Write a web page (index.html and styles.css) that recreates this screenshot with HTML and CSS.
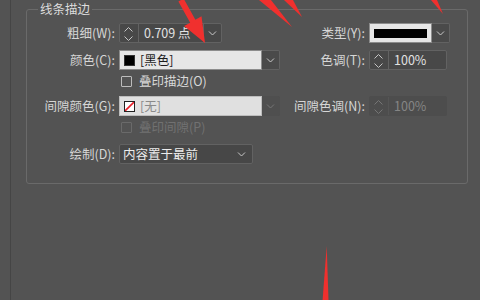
FILE: index.html
```html
<!DOCTYPE html>
<html lang="zh-CN">
<head>
<meta charset="utf-8">
<link rel="stylesheet" href="styles.css">
</head>
<body>
<div class="page">
  <div class="rail"></div>
  <main class="main">
    <fieldset class="group">
      <legend class="legend">线条描边</legend>
      <div class="rows">
        <div class="row">
          <span class="lbl">粗细(W):</span>
          <div class="spin spin-weight">
            <span class="arrows"><svg width="18" height="18" viewBox="0 0 18 18"><path d="M4.5 7.5L8.5 3.5L12.5 7.5M4.5 12.5L8.5 16.5L12.5 12.5" fill="none" stroke="#c4c4c4" stroke-width="1"/></svg></span>
            <span class="val">0.709 点</span>
            <span class="drop"><svg width="9" height="5" viewBox="0 0 9 5"><path d="M1 0.5L4.5 4L8 0.5" fill="none" stroke="#c8c8c8" stroke-width="1"/></svg></span>
          </div>
          <span class="lbl">类型(Y):</span>
          <div class="combo combo-type">
            <span class="field field-type"><span class="stroke-line"></span></span>
            <span class="btn"><svg width="9" height="5" viewBox="0 0 9 5"><path d="M1 0.5L4.5 4L8 0.5" fill="none" stroke="#c8c8c8" stroke-width="1"/></svg></span>
          </div>
        </div>

        <div class="row row-color">
          <span class="lbl">颜色(C):</span>
          <div class="combo combo-color">
            <span class="field"><span class="swatch swatch-black"></span><span class="ftext">[黑色]</span></span>
            <span class="btn"><svg width="9" height="5" viewBox="0 0 9 5"><path d="M1 0.5L4.5 4L8 0.5" fill="none" stroke="#c8c8c8" stroke-width="1"/></svg></span>
          </div>
          <span class="lbl">色调(T):</span>
          <div class="spin spin-tint">
            <span class="arrows"><svg width="18" height="18" viewBox="0 0 18 18"><path d="M4.5 7.5L8.5 3.5L12.5 7.5M4.5 12.5L8.5 16.5L12.5 12.5" fill="none" stroke="#c4c4c4" stroke-width="1"/></svg></span>
            <span class="val">100%</span>
          </div>
        </div>

        <div class="row row-check">
          <span></span>
          <div class="check"><span class="box"></span><span class="ctext">叠印描边(O)</span></div>
        </div>

        <div class="row row-gap">
          <span class="lbl">间隙颜色(G):</span>
          <div class="combo combo-color is-disabled">
            <span class="field"><span class="swatch swatch-none"><svg width="9" height="9" viewBox="0 0 9 9"><path d="M0 9L9 0" stroke="#e8202a" stroke-width="1.6"/></svg></span><span class="ftext">[无]</span></span>
            <span class="btn"><svg width="9" height="5" viewBox="0 0 9 5"><path d="M1 0.5L4.5 4L8 0.5" fill="none" stroke="#767676" stroke-width="1"/></svg></span>
          </div>
          <span class="lbl">间隙色调(N):</span>
          <div class="spin spin-tint is-disabled">
            <span class="arrows"><svg width="18" height="18" viewBox="0 0 18 18"><path d="M4.5 7.5L8.5 3.5L12.5 7.5M4.5 12.5L8.5 16.5L12.5 12.5" fill="none" stroke="#757575" stroke-width="1"/></svg></span>
            <span class="val">100%</span>
          </div>
        </div>

        <div class="row row-check">
          <span></span>
          <div class="check is-disabled"><span class="box"></span><span class="ctext">叠印间隙(P)</span></div>
        </div>

        <div class="row row-draw">
          <span class="lbl">绘制(D):</span>
          <div class="select">
            <span class="stext">内容置于最前</span>
            <svg width="9" height="5" viewBox="0 0 9 5"><path d="M1 0.5L4.5 4L8 0.5" fill="none" stroke="#c8c8c8" stroke-width="1"/></svg>
          </div>
        </div>
      </div>
    </fieldset>
  </main>
</div>
<svg class="marks" width="480" height="300" viewBox="0 0 480 300">
  <polygon points="178.4,1.5 183.6,-1.5 195.4,19.7 201.5,16.3 205,43 184.1,26.1 190.2,22.7" fill="#f0302e"/>
  <polygon points="259,0 271,0 292,27" fill="#f0302e"/>
  <polygon points="284,0 293,0 302,17" fill="#f0302e"/>
  <polygon points="431,0 437,0 443,14" fill="#f0302e"/>
  <polygon points="326.7,246 328.5,300 322.6,300" fill="#f0302e"/>
</svg>
</body>
</html>
```

FILE: styles.css
```css
html, body {
  margin: 0;
  padding: 0;
}
body {
  width: 480px;
  height: 300px;
  overflow: hidden;
  background: #535353;
  font-family: "Noto Sans CJK SC", "Noto Sans", sans-serif;
  font-size: 12.5px;
  color: #d8d8d8;
  position: relative;
}
.page {
  display: flex;
  height: 300px;
}
.rail {
  width: 10px;
  border-right: 1px solid #454545;
  flex: none;
}
.main {
  padding: 1px 0 0 15px;
}
.group {
  box-sizing: border-box;
  width: 442px;
  margin: 0;
  padding: 0 0 19px 0;
  border: 1px solid #6a6a6a;
  border-radius: 3px;
  min-inline-size: 0;
}
.legend {
  margin-left: 11px;
  padding: 0 2px;
  line-height: 16px;
  color: #dcdcdc;
}
.rows {
  display: flex;
  flex-direction: column;
  padding-top: 6px;
}
.row {
  display: grid;
  grid-template-columns: 88px 161px 81px 80px;
  column-gap: 4px;
  align-items: center;
  height: 20px;
}
.row-color { margin-top: 7px; }
.row-check { margin-top: 4px; height: 14px; }
.row-gap { margin-top: 8px; }
.row-draw { margin-top: 10px; }

.lbl {
  text-align: right;
  white-space: nowrap;
  line-height: 20px;
  color: #d6d6d6;
}

/* spinner */
.spin {
  box-sizing: border-box;
  height: 20px;
  display: flex;
  align-items: stretch;
  background: #484848;
  border: 1px solid #626262;
  border-radius: 2px;
}
.spin .arrows {
  width: 18px;
  flex: none;
  border-right: 1px solid #626262;
  display: flex;
  align-items: center;
  justify-content: center;
}
.spin .val {
  flex: 1;
  padding-left: 5px;
  line-height: 18px;
  color: #e2e2e2;
  white-space: nowrap;
}
.spin .drop {
  width: 17px;
  flex: none;
  border-left: 1px solid #626262;
  display: flex;
  align-items: center;
  justify-content: center;
}
.spin-weight { width: 103px; }
.spin-tint { width: 78px; }
.spin.is-disabled {
  background: #4d4d4d;
  border-color: #4d4d4d;
}
.spin.is-disabled .arrows { border-right-color: #555; }
.spin.is-disabled .val { color: #858585; }

/* combo */
.combo {
  height: 20px;
  display: flex;
  align-items: stretch;
}
.combo .field {
  box-sizing: border-box;
  flex: 1;
  display: flex;
  align-items: center;
  background: #e6e6e6;
  border: 1px solid #8c8c8c;
  padding-left: 4px;
}
.combo .btn {
  box-sizing: border-box;
  width: 18px;
  flex: none;
  display: flex;
  align-items: center;
  justify-content: center;
  background: #4a4a4a;
  border: 1px solid #626262;
  border-left: none;
  border-radius: 0 2px 2px 0;
}
.combo-color { width: 161px; }
.combo-type { width: 80px; }
.field-type {
  padding: 0 4px;
  background: #ececec;
}
.stroke-line {
  display: block;
  width: 53px;
  height: 9px;
  background: #000;
}
.swatch {
  box-sizing: border-box;
  width: 11px;
  height: 11px;
  flex: none;
  margin-right: 5px;
}
.swatch-black {
  background: #000;
  border: 1px solid #333;
}
.swatch-none {
  background: #fff;
  border: 1px solid #222;
  display: flex;
}
.swatch-none svg { display: block; }
.ftext {
  color: #1c1c1c;
  line-height: 18px;
}
.combo.is-disabled .field {
  background: #e0e0e0;
  border-color: #bdbdbd;
}
.combo.is-disabled .ftext { color: #8a8a8a; }
.combo.is-disabled .btn {
  background: #4f4f4f;
  border-color: #4f4f4f;
}

/* checkbox */
.check {
  display: flex;
  align-items: center;
  padding-left: 2px;
}
.check .box {
  box-sizing: border-box;
  width: 11px;
  height: 11px;
  border: 1px solid #bcbcbc;
  border-radius: 1px;
  margin-right: 7px;
}
.ctext {
  color: #d8d8d8;
  line-height: 14px;
  white-space: nowrap;
}
.check.is-disabled .box { border-color: #6a6a6a; }
.check.is-disabled .ctext { color: #717171; }

/* draw select */
.select {
  box-sizing: border-box;
  width: 134px;
  height: 20px;
  display: flex;
  align-items: center;
  justify-content: space-between;
  padding: 0 6px 0 3px;
  background: #474747;
  border: 1px solid #626262;
  border-radius: 2px;
}
.stext {
  color: #ececec;
  line-height: 18px;
  white-space: nowrap;
}

.marks {
  position: absolute;
  left: 0;
  top: 0;
  pointer-events: none;
}
```
